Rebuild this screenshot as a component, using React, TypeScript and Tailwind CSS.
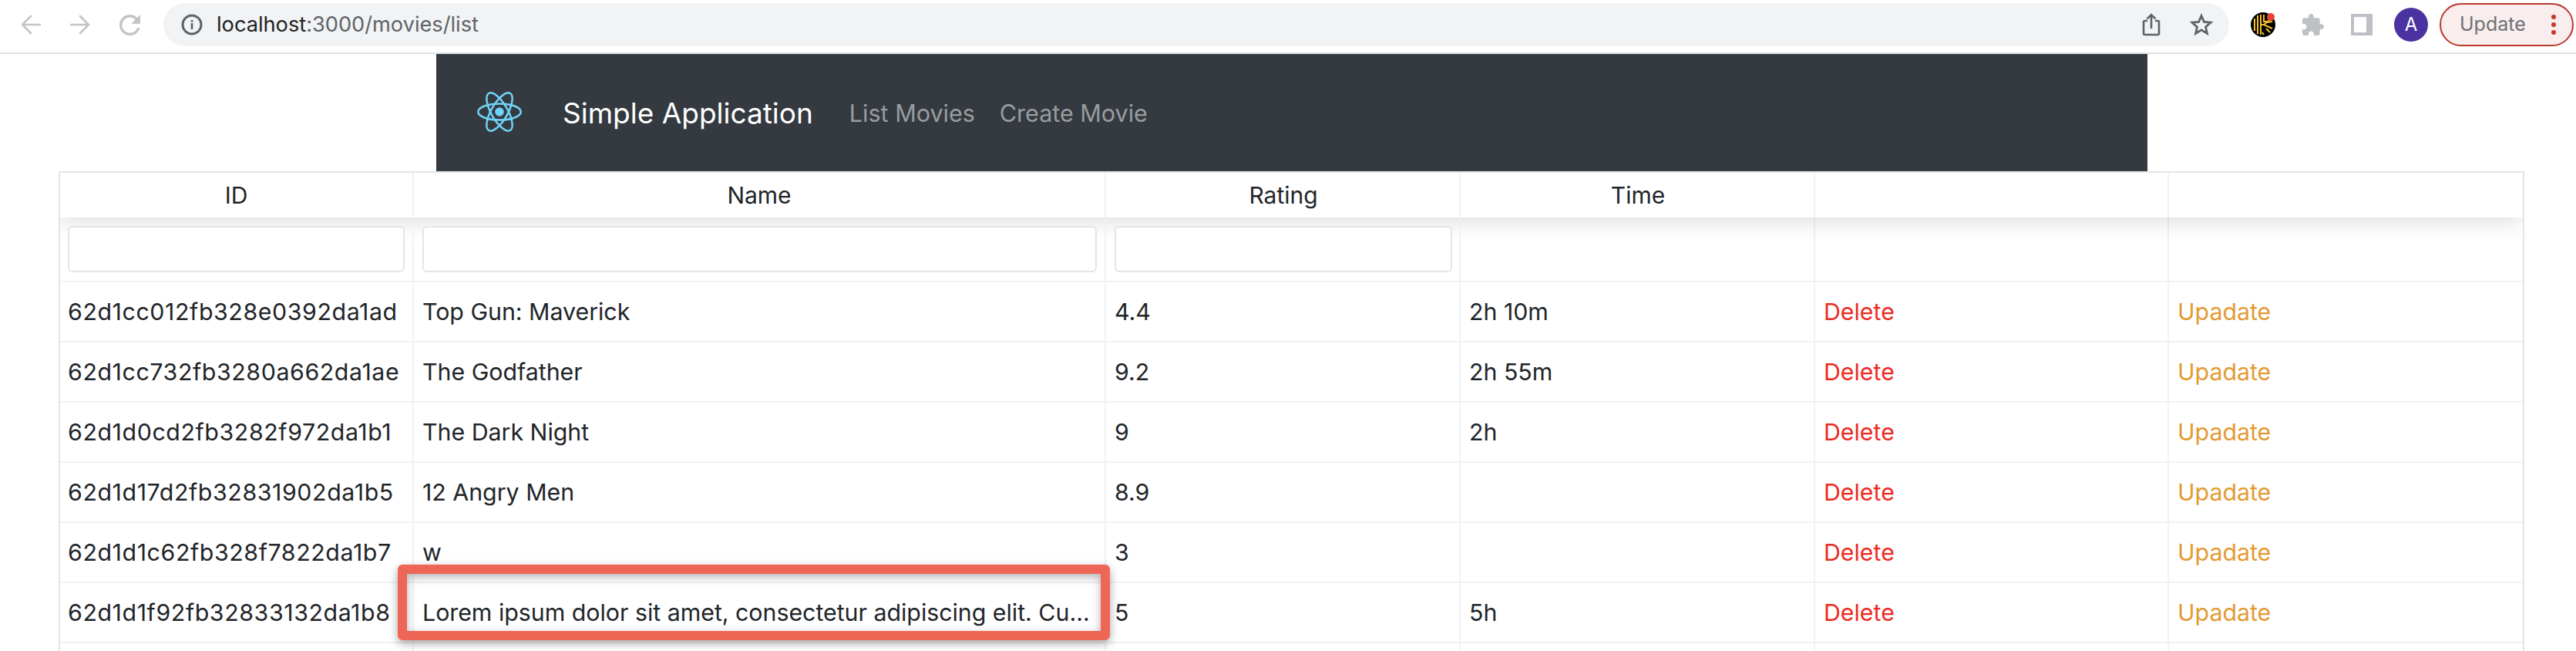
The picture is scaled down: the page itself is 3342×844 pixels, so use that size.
const movies = [
  { id: '62d1cc012fb328e0392da1ad', name: 'Top Gun: Maverick', rating: '4.4', time: '2h 10m' },
  { id: '62d1cc732fb3280a662da1ae', name: 'The Godfather', rating: '9.2', time: '2h 55m' },
  { id: '62d1d0cd2fb3282f972da1b1', name: 'The Dark Night', rating: '9', time: '2h' },
  { id: '62d1d17d2fb32831902da1b5', name: '12 Angry Men', rating: '8.9', time: '' },
  { id: '62d1d1c62fb328f7822da1b7', name: 'w', rating: '3', time: '' },
  {
    id: '62d1d1f92fb32833132da1b8',
    name: 'Lorem ipsum dolor sit amet, consectetur adipiscing elit. Curabitur blandit tempus porttitor.',
    rating: '5',
    time: '5h',
  },
];

const cellBorder = 'border-r-2 border-[#f2f2f2]';

function ReactLogo() {
  return (
    <svg width="58" height="52" viewBox="-11.5 -10.3 23 20.6" fill="none" stroke="#6fd3f7" strokeWidth="1" className="mb-[2px]">
      <circle r="2.3" fill="#6fd3f7" stroke="none" />
      <ellipse rx="11" ry="4.2" />
      <ellipse rx="11" ry="4.2" transform="rotate(60)" />
      <ellipse rx="11" ry="4.2" transform="rotate(120)" />
    </svg>
  );
}

function Toolbar() {
  return (
    <div className="flex h-[70px] items-start border-b-2 border-[#dee1e6] bg-white">
      <div className="flex h-[64px] w-[212px] shrink-0 items-center gap-[38px] pl-[27px]">
        <svg width="26" height="26" viewBox="0 0 26 26" fill="none" stroke="#c4c4c4" strokeWidth="2.6" strokeLinecap="round" strokeLinejoin="round">
          <path d="M25 13H2M13 2 2 13l11 11" />
        </svg>
        <svg width="26" height="26" viewBox="0 0 26 26" fill="none" stroke="#c4c4c4" strokeWidth="2.6" strokeLinecap="round" strokeLinejoin="round">
          <path d="M1 13h23M13 2l11 11-11 11" />
        </svg>
        <svg width="27" height="27" viewBox="4 4 16 16" fill="#c4c4c4">
          <path d="M17.65 6.35A7.958 7.958 0 0 0 12 4c-4.42 0-7.99 3.58-7.99 8s3.57 8 7.99 8c3.73 0 6.84-2.55 7.73-6h-2.08A5.99 5.99 0 0 1 12 18c-3.31 0-6-2.69-6-6s2.69-6 6-6c1.66 0 3.14.69 4.22 1.78L13 11h7V4l-2.35 2.35z" />
        </svg>
      </div>
      <div className="mt-[4px] flex h-[56px] w-[2680px] shrink-0 items-center rounded-full bg-[#f1f3f4] pl-[23px] pr-[21px]">
        <svg width="28" height="28" viewBox="0 0 28 28" fill="none" className="shrink-0">
          <circle cx="14" cy="14" r="12" stroke="#5f6368" strokeWidth="3" />
          <rect x="12.7" y="12" width="2.6" height="8" fill="#5f6368" />
          <rect x="12.7" y="8" width="2.6" height="2.6" fill="#5f6368" />
        </svg>
        <span className="ml-[18px] font-['Inter',sans-serif] text-[27.2px] text-[#5f6368]">
          <span className="text-[#202124]">localhost</span>:3000/movies/list
        </span>
        <div className="ml-auto flex items-center gap-[38px]">
          <svg width="24" height="30" viewBox="0 0 24 30" fill="none" stroke="#5f6368" strokeWidth="2.6">
            <path d="M7 10H3.500A1.500 1.500 0 0 0 2 11.500V26.500A1.500 1.500 0 0 0 3.500 28h17a1.500 1.500 0 0 0 1.500-1.500V11.500A1.500 1.500 0 0 0 20.500 10H17" />
            <path d="M12 20V2M6.500 7.500 12 2l5.500 5.500" />
          </svg>
          <svg width="30" height="30" viewBox="0 0 30 30" fill="none" stroke="#5f6368" strokeWidth="2.8">
            <path d="M15 3.500l3.400 7.900 8.600.8-6.500 5.700 1.900 8.400L15 21.900l-7.400 4.400 1.900-8.400L3 12.200l8.600-.8z" />
          </svg>
        </div>
      </div>
      <div className="flex h-[64px] flex-1 items-center pl-[28px]">
        <svg width="32" height="32" viewBox="0 0 32 32" fill="none">
          <circle cx="16" cy="16" r="16" fill="#000" />
          <path
            d="M5 8v16M9 4v24M13 3v26M13 16h4l11-9M17 3v9h5M17 29l-2-3M17 16l11 5M20 21l5 5M21 13l7-1"
            stroke="#f5c02c"
            strokeWidth="2"
          />
          <circle cx="26" cy="6" r="5" fill="#ea4335" />
        </svg>
        <svg width="28" height="28" viewBox="2 1 21 21" fill="#bdc1c6" className="ml-[35px]">
          <path d="M20.5 11H19V7c0-1.100-.9-2-2-2h-4V3.500C13 2.120 11.880 1 10.500 1S8 2.120 8 3.500V5H4c-1.100 0-1.990.9-1.990 2v3.800H3.500c1.490 0 2.700 1.210 2.700 2.700s-1.210 2.700-2.700 2.700H2V20c0 1.100.9 2 2 2h3.800v-1.500c0-1.490 1.210-2.700 2.700-2.700 1.490 0 2.700 1.210 2.700 2.700V22H17c1.100 0 2-.9 2-2v-4h1.500c1.380 0 2.500-1.120 2.500-2.500S21.880 11 20.500 11z" />
        </svg>
        <div className="ml-[35px] flex h-[28px] w-[28px] items-stretch border-y-[4px] border-l-[4px] border-[#bdc1c6]">
          <div className="flex-1 bg-white" />
          <div className="w-[8px] bg-[#bdc1c6]" />
        </div>
        <div className="ml-[28px] flex h-[44px] w-[44px] items-center justify-center rounded-full bg-[#4a32a0] font-['Inter',sans-serif] text-[24px] text-white">
          A
        </div>
        <div className="ml-[15px] flex h-[56px] w-[174px] items-center rounded-full border-2 border-[#b93a2b] bg-[#f9eded] pl-[24px] font-['Inter',sans-serif] text-[25px] text-[#6e7176]">
          Update
          <div className="ml-[33px] flex flex-col gap-[4px]">
            <span className="h-[6px] w-[6px] rounded-full bg-[#c5392b]" />
            <span className="h-[6px] w-[6px] rounded-full bg-[#c5392b]" />
            <span className="h-[6px] w-[6px] rounded-full bg-[#c5392b]" />
          </div>
        </div>
      </div>
    </div>
  );
}

function Navbar() {
  return (
    <div className="ml-[566px] flex h-[152px] w-[2220px] items-center bg-[#343a40] pl-[53px] font-['Inter',sans-serif]">
      <ReactLogo />
      <span className="ml-[53px] mt-[2px] text-[37px] text-white">Simple Application</span>
      <span className="ml-[47px] mt-[2px] text-[30.5px] text-[#999c9f]">List Movies</span>
      <span className="ml-[32px] mt-[2px] text-[30.5px] text-[#999c9f]">Create Movie</span>
    </div>
  );
}

function Row({ movie }: { movie: (typeof movies)[number] }) {
  return (
    <div className="flex h-[78px] border-b-2 border-[#f2f2f2] text-[30.3px]">
      <div className={`flex w-[459px] items-center pl-[10px] pt-[2px] tracking-[0.6px] ${cellBorder}`}>{movie.id}</div>
      <div className={`flex w-[898px] items-center px-[11px] pt-[2px] ${cellBorder}`}>
        <span className="truncate">{movie.name}</span>
      </div>
      <div className={`flex w-[460px] items-center px-[11px] pt-[2px] ${cellBorder}`}>{movie.rating}</div>
      <div className={`flex w-[460px] items-center px-[11px] pt-[2px] ${cellBorder}`}>{movie.time}</div>
      <div className={`flex w-[459px] items-center px-[11px] pt-[2px] text-[#ee2a1f] ${cellBorder}`}>Delete</div>
      <div className="flex flex-1 items-center px-[11px] pt-[2px] text-[#e39a32]">Upadate</div>
    </div>
  );
}

function MovieTable() {
  return (
    <div className="ml-[76px] h-[700px] w-[3199px] overflow-hidden border-2 border-[#e5e5e5] font-['Inter',sans-serif] text-[30px] text-[#212529]">
      <div className="relative z-10 flex h-[58px] bg-white text-center shadow-[0_4px_30px_0_rgba(0,0,0,0.15)]">
        <div className={`w-[459px] leading-[58px] ${cellBorder}`}>ID</div>
        <div className={`w-[898px] leading-[58px] ${cellBorder}`}>Name</div>
        <div className={`w-[460px] pl-[2px] leading-[58px] ${cellBorder}`}>Rating</div>
        <div className={`w-[460px] pl-[2px] leading-[58px] ${cellBorder}`}>Time</div>
        <div className={`w-[459px] ${cellBorder}`} />
        <div className="flex-1" />
      </div>
      <div className="flex h-[84px] border-b-2 border-[#f2f2f2]">
        <div className={`relative z-20 w-[459px] px-[10px] pt-[11px] ${cellBorder}`}>
          <div className="h-[60px] rounded-[6px] border-2 border-[#e5e5e5] bg-white" />
        </div>
        <div className={`relative z-20 w-[898px] pl-[11px] pr-[10px] pt-[11px] ${cellBorder}`}>
          <div className="h-[60px] rounded-[6px] border-2 border-[#e5e5e5] bg-white" />
        </div>
        <div className={`relative z-20 w-[460px] pl-[11px] pr-[9px] pt-[11px] ${cellBorder}`}>
          <div className="h-[60px] rounded-[6px] border-2 border-[#e5e5e5] bg-white" />
        </div>
        <div className={`w-[460px] ${cellBorder}`} />
        <div className={`w-[459px] ${cellBorder}`} />
        <div className="flex-1" />
      </div>
      {movies.map((m) => (
        <Row key={m.id} movie={m} />
      ))}
      {/* next row is cut off by the window, only its column lines show */}
      <div className="flex h-[78px]">
        <div className={`w-[459px] ${cellBorder}`} />
        <div className={`w-[898px] ${cellBorder}`} />
        <div className={`w-[460px] ${cellBorder}`} />
        <div className={`w-[460px] ${cellBorder}`} />
        <div className={`w-[459px] ${cellBorder}`} />
      </div>
    </div>
  );
}

export default function App() {
  return (
    <div className="relative h-[844px] w-[3342px] overflow-hidden bg-white">
      <Toolbar />
      <Navbar />
      <MovieTable />
      {/* annotation drawn on top of the screenshot */}
      <div className="absolute left-[516px] top-[732px] z-30 h-[98px] w-[924px] rounded-[6px] border-[12px] border-[#ee6655] shadow-[0_4px_12px_rgba(0,0,0,0.35),inset_0_4px_12px_rgba(0,0,0,0.3)]" />
    </div>
  );
}
